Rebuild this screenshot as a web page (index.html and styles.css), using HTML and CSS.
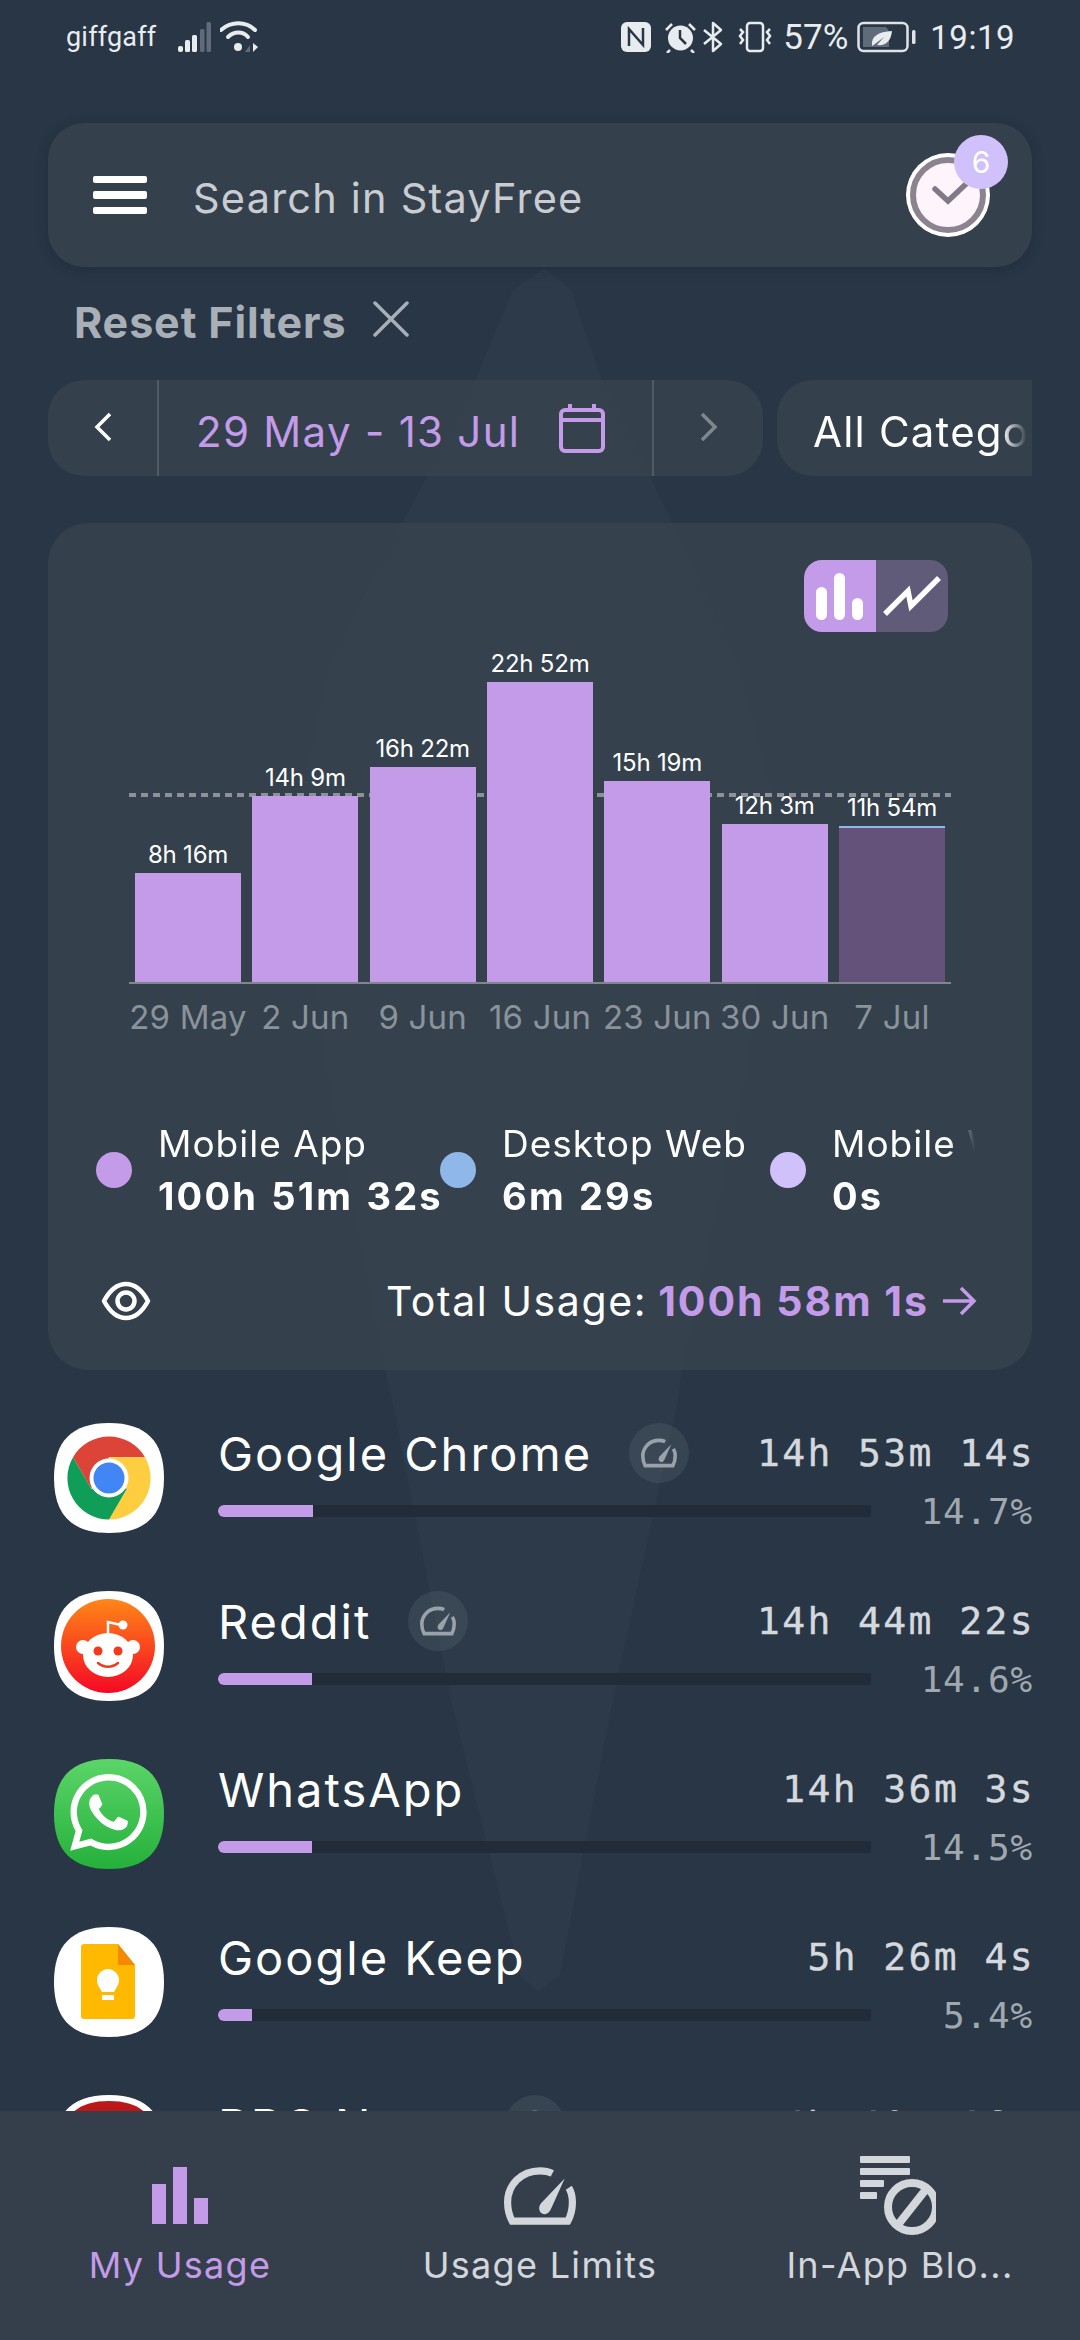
FILE: index.html
```html
<!DOCTYPE html>
<html lang="en">
<head>
<meta charset="utf-8">
<title>StayFree</title>
<link rel="stylesheet" href="styles.css">
</head>
<body>
<div class="phone">
  <svg class="backdrop" width="1080" height="2340" viewBox="0 0 1080 2340" aria-hidden="true">
    <polygon points="544,268 571,290 602,380 650,476 737,660 775,800 750,1060 682,1370 678,1400 613,1700 560,1975 538,1992 520,1975 451,1700 392,1400 385,1370 324,1060 300,800 330,660 427,476 475,380 513,290"/>
  </svg>

  <main class="main">
    <header class="status">
      <div class="status-side">
        <span class="carrier">giffgaff</span>
        <svg class="st-signal" width="34" height="32" viewBox="0 0 34 32"><g fill="#e9ecef"><rect x="0" y="25" width="5" height="6" rx="2"/><rect x="7" y="19" width="5" height="12" rx="1.5"/><rect x="14" y="14" width="5" height="17" rx="1.5"/></g><g fill="#5f6b78"><rect x="22" y="8" width="4.5" height="23" rx="1.5"/><rect x="28.5" y="1" width="4.5" height="30" rx="1.5"/></g></svg>
        <svg class="st-wifi" width="40" height="32" viewBox="0 0 40 32"><g fill="none" stroke="#e9ecef" stroke-width="4" stroke-linecap="round"><path d="M1 9C11 0 26 0 35 9"/><path d="M8 16C14 10 23 10 28 16"/></g><circle cx="18" cy="26" r="4" fill="#e9ecef"/><path d="M30 31V24l-5 7Z" fill="#5f6b78"/><path d="M33 22v9l5-5Z" fill="#e9ecef"/></svg>
      </div>
      <div class="status-side">
        <svg class="st-nfc" width="30" height="30" viewBox="0 0 30 30"><rect width="30" height="30" rx="6" fill="#e9ecef"/><path d="M8 24V7l14 16V6" fill="none" stroke="#283645" stroke-width="2.5"/></svg>
        <svg class="st-alarm" width="33" height="32" viewBox="0 0 33 32"><circle cx="16.500" cy="17" r="12.500" fill="#e9ecef"/><path d="M16 9v8l6 6" fill="none" stroke="#283645" stroke-width="2.500"/><path d="M2 9l6-6M31 9l-6-6M6 29l-3 3M27 29l3 3" stroke="#e9ecef" stroke-width="2.500" fill="none"/></svg>
        <svg class="st-bt" width="22" height="32" viewBox="0 0 22 32"><path d="M2 9l17 14-8 7V2l8 7L2 23" fill="none" stroke="#e9ecef" stroke-width="2.500" stroke-linejoin="round"/></svg>
        <svg class="st-vib" width="38" height="32" viewBox="0 0 38 32"><rect x="11" y="2" width="16" height="28" rx="3" fill="none" stroke="#e9ecef" stroke-width="2.500"/><path d="M4 8l3 3-3 4 3 4-3 4M34 8l-3 3 3 4-3 4 3 4" fill="none" stroke="#e9ecef" stroke-width="2.500"/></svg>
        <span class="pct">57%</span>
        <svg class="st-batt" width="60" height="32" viewBox="0 0 60 32"><rect x="1.500" y="2" width="49" height="28" rx="5" fill="none" stroke="#dfe3e7" stroke-width="2.500"/><path d="M6 6h23l3 4v16H6Z" fill="#5f6b78"/><rect x="55" y="9" width="3.500" height="14" rx="1.500" fill="#dfe3e7"/><path d="M15 25c-1-10 6-14 20-15-1 10-6 15-15 14l7-8-9 7Z" fill="#e9ecef"/></svg>
        <span class="clock-time">19:19</span>
      </div>
    </header>

    <section class="search">
      <div class="burger"><i></i><i></i><i></i></div>
      <span class="search-text">Search in StayFree</span>
      <div class="todo">
        <svg width="84" height="84" viewBox="0 0 84 84"><circle cx="42" cy="42" r="42" fill="#fff"/><circle cx="42" cy="42" r="35" fill="#fdf5fb" stroke="#8b8490" stroke-width="6"/><path d="M29 36l13 12 19-18" fill="none" stroke="#7f7a85" stroke-width="5.500" stroke-linecap="round" stroke-linejoin="miter"/></svg>
        <span class="badge">6</span>
      </div>
    </section>

    <div class="reset">
      <span>Reset Filters</span>
      <svg width="36" height="36" viewBox="0 0 36 36"><path d="M2 2l32 32M34 2L2 34" fill="none" stroke="#a9afb6" stroke-width="3.500" stroke-linecap="round"/></svg>
    </div>

    <div class="filters">
      <div class="date-pill">
        <div class="chev-cell">
          <svg width="20" height="30" viewBox="0 0 20 30"><path d="M17 2L4 15l13 13" fill="none" stroke="#fff" stroke-width="3.500"/></svg>
        </div>
        <div class="date-cell">
          <span>29 May - 13 Jul</span>
          <svg width="48" height="50" viewBox="0 0 48 50"><rect x="3" y="7" width="42" height="41" rx="4" fill="none" stroke="#c39be8" stroke-width="4"/><path d="M3 17h42M12 1v8M36 1v8" stroke="#c39be8" stroke-width="4" fill="none"/></svg>
        </div>
        <div class="chev-cell">
          <svg width="20" height="30" viewBox="0 0 20 30"><path d="M3 2l13 13L3 28" fill="none" stroke="#7f878f" stroke-width="3.500"/></svg>
        </div>
      </div>
      <div class="cat-pill"><span>All Categories</span></div>
    </div>

    <section class="card">
      <div class="toggle">
        <div class="toggle-on">
          <svg width="72" height="72" viewBox="0 0 72 72"><g fill="#fff"><rect x="12" y="27" width="11" height="33" rx="5.500"/><rect x="30" y="13" width="11" height="47" rx="5.500"/><rect x="48" y="38" width="11" height="22" rx="5.500"/></g></svg>
        </div>
        <div class="toggle-off">
          <svg width="72" height="72" viewBox="0 0 72 72"><path d="M9 54l23-23 3 15 28-28" fill="none" stroke="#fff" stroke-width="5.500" stroke-linejoin="miter"/></svg>
        </div>
      </div>

      <div class="plot">
        <div class="avg-line"></div>
        <div class="bars">
          <div class="bar-col"><span class="bar-label">8h 16m</span><div class="bar" style="height:109px"></div></div>
          <div class="bar-col"><span class="bar-label">14h 9m</span><div class="bar" style="height:186px"></div></div>
          <div class="bar-col"><span class="bar-label">16h 22m</span><div class="bar" style="height:215px"></div></div>
          <div class="bar-col"><span class="bar-label">22h 52m</span><div class="bar" style="height:300px"></div></div>
          <div class="bar-col"><span class="bar-label">15h 19m</span><div class="bar" style="height:201px"></div></div>
          <div class="bar-col"><span class="bar-label">12h 3m</span><div class="bar" style="height:158px"></div></div>
          <div class="bar-col"><span class="bar-label">11h 54m</span><div class="bar bar-current" style="height:156px"></div></div>
        </div>
      </div>
      <div class="axis">
        <span>29 May</span><span>2 Jun</span><span>9 Jun</span><span>16 Jun</span><span>23 Jun</span><span>30 Jun</span><span>7 Jul</span>
      </div>

      <div class="legend">
        <div class="legend-item legend-a">
          <i class="dot dot-app"></i>
          <div class="legend-text"><span>Mobile App</span><b>100h 51m 32s</b></div>
        </div>
        <div class="legend-item legend-b">
          <i class="dot dot-desktop"></i>
          <div class="legend-text"><span>Desktop Web</span><b>6m 29s</b></div>
        </div>
        <div class="legend-item">
          <i class="dot dot-web"></i>
          <div class="legend-text"><span>Mobile Web</span><b>0s</b></div>
        </div>
      </div>

      <div class="total">
        <svg width="50" height="40" viewBox="0 0 50 40"><path d="M3 20C10 7 17 3 25 3s15 4 22 17c-7 13-14 17-22 17S10 33 3 20Z" fill="none" stroke="#fff" stroke-width="4.500" stroke-linejoin="round"/><circle cx="25" cy="20" r="8.500" fill="none" stroke="#fff" stroke-width="4.500"/></svg>
        <div class="total-text">
          <span class="total-label">Total Usage:</span>
          <b>100h 58m 1s</b>
          <svg width="36" height="32" viewBox="0 0 36 32"><path d="M2 16h31M20 3l13 13-13 13" fill="none" stroke="#c39be8" stroke-width="3.500"/></svg>
        </div>
      </div>
    </section>

    <ul class="apps">
      <li class="app">
        <svg class="app-icon" viewBox="0 0 110 110">
          <path class="sq-white" d="M55 0C92 0 110 18 110 55S92 110 55 110 0 92 0 55 18 0 55 0Z"/>
          <path fill="#db4437" d="M19 34.250A41.500 41.500 0 0 1 91 34.250H55L37 65.400Z"/>
          <path fill="#ffcd40" transform="rotate(120 55 55)" d="M19 34.250A41.500 41.500 0 0 1 91 34.250H55L37 65.400Z"/>
          <path fill="#0f9d58" transform="rotate(240 55 55)" d="M19 34.250A41.500 41.500 0 0 1 91 34.250H55L37 65.400Z"/>
          <circle cx="55" cy="55" r="19.500" fill="#fff"/><circle cx="55" cy="55" r="15.500" fill="#4285f4"/>
        </svg>
        <div class="app-body">
          <div class="app-top">
            <span class="app-name">Google Chrome</span>
            <span class="chip"><svg width="36" height="30" viewBox="0 0 70 56"><use href="#gauge"/></svg></span>
            <span class="app-time">14h 53m 14s</span>
          </div>
          <div class="app-bottom">
            <div class="track"><div class="fill" style="width:95px"></div></div>
            <span class="app-pct">14.7%</span>
          </div>
        </div>
      </li>
      <li class="app">
        <svg class="app-icon" viewBox="0 0 110 110">
          <defs><linearGradient id="rd" x1="0" y1="0" x2="0" y2="1"><stop offset="0" stop-color="#ff8717"/><stop offset="1" stop-color="#f50825"/></linearGradient></defs>
          <path class="sq-white" d="M55 0C92 0 110 18 110 55S92 110 55 110 0 92 0 55 18 0 55 0Z"/>
          <circle cx="54" cy="55" r="47" fill="url(#rd)"/>
          <path d="M54 52V31l13 3" fill="none" stroke="#fff" stroke-width="2.500"/><circle cx="69" cy="34" r="4.500" fill="#fff"/>
          <circle cx="29" cy="56" r="7" fill="#fff"/><circle cx="79" cy="56" r="7" fill="#fff"/>
          <ellipse cx="54" cy="64" rx="25" ry="22" fill="#fff"/>
          <circle cx="44" cy="60" r="4.500" fill="#f4381b"/><circle cx="64" cy="60" r="4.500" fill="#f4381b"/>
          <path d="M44 72c6 5 14 5 20 0" fill="none" stroke="#f4381b" stroke-width="2.500" stroke-linecap="round"/>
        </svg>
        <div class="app-body">
          <div class="app-top">
            <span class="app-name">Reddit</span>
            <span class="chip"><svg width="36" height="30" viewBox="0 0 70 56"><use href="#gauge"/></svg></span>
            <span class="app-time">14h 44m 22s</span>
          </div>
          <div class="app-bottom">
            <div class="track"><div class="fill" style="width:94px"></div></div>
            <span class="app-pct">14.6%</span>
          </div>
        </div>
      </li>
      <li class="app">
        <svg class="app-icon" viewBox="0 0 110 110">
          <defs><linearGradient id="wa" x1="0" y1="0" x2="0" y2="1"><stop offset="0" stop-color="#5bd568"/><stop offset="1" stop-color="#25b03b"/></linearGradient></defs>
          <path fill="url(#wa)" d="M55 0C92 0 110 18 110 55S92 110 55 110 0 92 0 55 18 0 55 0Z"/>
          <path transform="translate(16 15) scale(3.200)" fill="#fff" d="M17.472 14.382c-.297-.149-1.758-.867-2.03-.967-.273-.099-.471-.148-.67.15-.197.297-.767.966-.94 1.164-.173.199-.347.223-.644.075-.297-.15-1.255-.463-2.39-1.475-.883-.788-1.48-1.761-1.653-2.059-.173-.297-.018-.458.13-.606.134-.133.298-.347.446-.52.149-.174.198-.298.298-.497.099-.198.05-.371-.025-.52-.075-.149-.669-1.612-.916-2.207-.242-.579-.487-.5-.669-.51-.173-.008-.371-.01-.57-.01-.198 0-.52.074-.792.372-.272.297-1.04 1.016-1.04 2.479 0 1.462 1.065 2.875 1.213 3.074.149.198 2.096 3.2 5.077 4.487.709.306 1.262.489 1.694.625.712.227 1.36.195 1.871.118.571-.085 1.758-.719 2.006-1.413.248-.694.248-1.289.173-1.413-.074-.124-.272-.198-.57-.347m-5.421 7.403h-.004a9.87 9.87 0 01-5.031-1.378l-.361-.214-3.741.982.998-3.648-.235-.374a9.86 9.86 0 01-1.51-5.26c.001-5.45 4.436-9.884 9.888-9.884 2.64 0 5.122 1.03 6.988 2.898a9.825 9.825 0 012.893 6.994c-.003 5.45-4.437 9.884-9.885 9.884m8.413-18.297A11.815 11.815 0 0012.05 0C5.495 0 .16 5.335.157 11.892c0 2.096.547 4.142 1.588 5.945L.057 24l6.305-1.654a11.882 11.882 0 005.683 1.448h.005c6.554 0 11.89-5.335 11.893-11.893a11.821 11.821 0 00-3.48-8.413Z"/>
        </svg>
        <div class="app-body">
          <div class="app-top">
            <span class="app-name">WhatsApp</span>
            <span class="app-time">14h 36m 3s</span>
          </div>
          <div class="app-bottom">
            <div class="track"><div class="fill" style="width:94px"></div></div>
            <span class="app-pct">14.5%</span>
          </div>
        </div>
      </li>
      <li class="app">
        <svg class="app-icon" viewBox="0 0 110 110">
          <path class="sq-white" d="M55 0C92 0 110 18 110 55S92 110 55 110 0 92 0 55 18 0 55 0Z"/>
          <path fill="#ffb900" d="M30 17H64L81 38V89a3 3 0 0 1-3 3H30a3 3 0 0 1-3-3V20a3 3 0 0 1 3-3Z"/>
          <path fill="#f48a00" d="M64 17L81 38H64Z"/>
          <path fill="#fff" d="M54 42c-6 0-11 5-11 11 0 5 3 8 5 12h12c2-4 5-7 5-12 0-6-5-11-11-11Z"/><rect x="48" y="68" width="12" height="5" fill="#fff"/>
        </svg>
        <div class="app-body">
          <div class="app-top">
            <span class="app-name">Google Keep</span>
            <span class="app-time">5h 26m 4s</span>
          </div>
          <div class="app-bottom">
            <div class="track"><div class="fill" style="width:34px"></div></div>
            <span class="app-pct">5.4%</span>
          </div>
        </div>
      </li>
      <li class="app">
        <svg class="app-icon" viewBox="0 0 110 110">
          <path class="sq-white" d="M55 0C92 0 110 18 110 55S92 110 55 110 0 92 0 55 18 0 55 0Z"/>
          <path fill="#bb1919" transform="translate(6 6) scale(.89)" d="M55 0C92 0 110 18 110 55S92 110 55 110 0 92 0 55 18 0 55 0Z"/>
        </svg>
        <div class="app-body">
          <div class="app-top">
            <span class="app-name">BBC News</span>
            <span class="chip"><svg width="36" height="30" viewBox="0 0 70 56"><use href="#gauge"/></svg></span>
            <span class="app-time">4h 40m 16s</span>
          </div>
        </div>
      </li>
    </ul>
  </main>

  <nav class="nav">
    <div class="nav-item nav-active">
      <svg width="58" height="58" viewBox="0 0 58 58"><g fill="#c39be8"><rect x="1" y="17" width="14" height="40"/><rect x="22" y="0" width="14" height="57"/><rect x="43" y="31" width="14" height="26"/></g></svg>
      <span>My Usage</span>
    </div>
    <div class="nav-item">
      <svg width="72" height="58" viewBox="0 0 70 56"><use href="#gauge" class="gauge-nav"/></svg>
      <span>Usage Limits</span>
    </div>
    <div class="nav-item">
      <svg class="nav-block" width="84" height="82" viewBox="0 0 84 82"><g fill="#d3d7db"><rect x="8" y="0" width="50" height="7" rx="1"/><rect x="8" y="12" width="50" height="7" rx="1"/><rect x="8" y="24" width="24" height="7" rx="1"/><rect x="8" y="36" width="17" height="7" rx="1"/></g><circle cx="60" cy="51" r="24" fill="none" stroke="#d3d7db" stroke-width="8"/><path d="M45 70L75 32" stroke="#d3d7db" stroke-width="8"/></svg>
      <span>In-App Blo...</span>
    </div>
  </nav>

  <svg class="defs" width="0" height="0" aria-hidden="true">
    <defs>
      <g id="gauge">
        <path d="M47 6C43 4 39 3.500 35 3.500 17 3.500 3.500 17 3.500 34c0 7 1.500 13 4.500 18.500H62C65 47 66.500 41 66.500 34c0-5-1-10-3.500-14" fill="none" stroke="currentColor" stroke-width="7"/>
        <path d="M59 11L46 40c-2 5-6 7-9 5-3-2-4-6-1-10Z" fill="currentColor"/>
      </g>
    </defs>
  </svg>
</div>
</body>
</html>
```

FILE: styles.css
```css
* { box-sizing: border-box; }
html, body { margin: 0; padding: 0; }
body { font-family: Inter, "Noto Sans", sans-serif; background: #283645; }

.phone {
  position: relative;
  width: 1080px;
  height: 2340px;
  overflow: hidden;
  display: flex;
  flex-direction: column;
  background: #283645;
  color: #fff;
}
.backdrop { position: absolute; left: 0; top: 0; }
.backdrop polygon { fill: #2c3a49; }
.defs { position: absolute; }

.main {
  position: relative;
  flex: 1;
  min-height: 0;
  overflow: hidden;
  padding: 0 48px;
}

/* status bar */
.status {
  height: 76px;
  padding: 20px 17px 0 18px;
  display: flex;
  justify-content: space-between;
  align-items: flex-start;
  color: #e9ecef;
}
.status-side { display: flex; align-items: center; height: 34px; }
.carrier { font-family: Roboto, sans-serif; font-size: 27px; letter-spacing: .2px; width: 112px; }
.st-wifi { margin-left: 8px; }
.st-alarm { margin-left: 13px; }
.st-bt { margin-left: 5px; }
.st-vib { margin-left: 12px; }
.pct { font-family: Roboto, sans-serif; font-size: 35px; margin-left: 9px; }
.st-batt { margin-left: 9px; }
.clock-time { font-family: Roboto, sans-serif; font-size: 33px; margin-left: 13px; letter-spacing: .5px; }

/* search */
.search {
  margin-top: 47px;
  height: 144px;
  border-radius: 36px;
  background: rgba(62, 72, 82, .55);
  box-shadow: 0 2px 12px rgba(20, 30, 42, .35);
  display: flex;
  align-items: center;
  padding: 0 42px 0 45px;
}
.burger { width: 54px; display: flex; flex-direction: column; gap: 8px; }
.burger i { display: block; height: 7.500px; border-radius: 2px; background: #fff; }
.search-text { flex: 1; margin: 6px 0 0 46px; font-size: 41.500px; letter-spacing: 1.200px; color: #c9cdd1; }
.todo { position: relative; width: 84px; height: 84px; }
.todo svg { display: block; }
.badge {
  position: absolute;
  left: 48px;
  top: -18px;
  width: 54px;
  height: 54px;
  border-radius: 50%;
  background: #d0c1fb;
  color: #fff;
  font-size: 30px;
  line-height: 54px;
  text-align: center;
}

/* reset */
.reset {
  margin-top: 30px;
  height: 50px;
  padding-left: 26px;
  display: flex;
  align-items: center;
  gap: 27px;
  color: #a9afb6;
  font-size: 43px;
  font-weight: 700;
  letter-spacing: .9px;
  white-space: nowrap;
}
.reset svg { margin-top: -7px; }

/* filters */
.filters {
  margin-top: 33px;
  display: flex;
  gap: 14px;
  overflow: hidden;
}
.date-pill {
  flex: none;
  width: 715px;
  height: 96px;
  border-radius: 36px;
  background: rgba(62, 72, 82, .55);
  display: flex;
}
.chev-cell { width: 109px; display: flex; align-items: center; justify-content: center; }
.chev-cell svg { margin-top: -3px; }
.date-cell {
  flex: 1;
  border-left: 2px solid #515b66;
  border-right: 2px solid #515b66;
  padding-left: 37px;
  display: flex;
  align-items: center;
  gap: 38px;
  color: #c39be8;
  font-size: 42px;
  letter-spacing: 1.300px;
}
.date-cell span { margin-top: 6px; white-space: nowrap; }
.cat-pill {
  flex: none;
  width: 300px;
  height: 96px;
  border-radius: 36px;
  background: rgba(62, 72, 82, .55);
  padding: 6px 0 0 36px;
  display: flex;
  align-items: center;
  font-size: 42px;
  letter-spacing: 1.200px;
  white-space: nowrap;
  overflow: hidden;
}
.cat-pill span { width: 214px; overflow: hidden; -webkit-mask-image: linear-gradient(to right, #000 88%, transparent); mask-image: linear-gradient(to right, #000 88%, transparent); }

/* chart card */
.card {
  margin-top: 47px;
  height: 847px;
  border-radius: 40px;
  background: rgba(62, 72, 82, .55);
  padding-top: 37px;
}
.toggle {
  width: 144px;
  height: 72px;
  margin-left: 756px;
  border-radius: 18px;
  overflow: hidden;
  display: flex;
}
.toggle-on { width: 72px; background: #c39be8; }
.toggle-off { width: 72px; background: #5f5b78; }
.toggle svg { display: block; }

.plot {
  position: relative;
  height: 352px;
  margin: 0 81px;
  padding: 0 6px;
  border-bottom: 2px solid #7f868e;
}
.avg-line {
  position: absolute;
  left: 0;
  right: 0;
  top: 161px;
  height: 4px;
  background: repeating-linear-gradient(to right, #8c9298 0 7px, transparent 7px 12px);
}
.bars {
  position: relative;
  height: 100%;
  display: grid;
  grid-template-columns: repeat(7, minmax(0, 1fr));
  column-gap: 11.300px;
}
.bar-col { display: flex; flex-direction: column; justify-content: flex-end; align-items: stretch; min-width: 0; }
.bar-label { font-size: 24px; line-height: 30px; text-align: center; white-space: nowrap; margin-bottom: 3px; letter-spacing: -.2px; }
.bar { background: #c39be8; }
.bar-current { background: #65527a; border-top: 2px solid #8fb8e8; }

.axis {
  margin: 11px 81px 0;
  padding: 0 6px;
  display: grid;
  grid-template-columns: repeat(7, minmax(0, 1fr));
  column-gap: 11.300px;
  color: #8a929a;
  font-size: 33px;
  letter-spacing: .2px;
  line-height: 44px;
  white-space: nowrap;
}
.axis span { display: flex; justify-content: center; }

.legend {
  margin: 79px 57px 0 48px;
  height: 104px;
  display: flex;
  overflow: hidden;
  -webkit-mask-image: linear-gradient(to right, #000 97%, transparent 100%);
  mask-image: linear-gradient(to right, #000 97%, transparent 100%);
}
.legend-item { flex: none; display: flex; align-items: center; gap: 26px; }
.legend-a { width: 344px; }
.legend-b { width: 330px; }
.dot { flex: none; width: 36px; height: 36px; border-radius: 50%; }
.dot-app { background: #c39be8; }
.dot-desktop { background: #8fb8e8; }
.dot-web { background: #d0c1fb; }
.legend-text { display: flex; flex-direction: column; white-space: nowrap; font-size: 37px; line-height: 52px; letter-spacing: 1px; }
.legend-text b { font-size: 38px; font-weight: 700; letter-spacing: 2.200px; word-spacing: 2px; }

.total {
  margin: 54px 55px 0 53px;
  display: flex;
  justify-content: space-between;
  align-items: center;
}
.total-text { display: flex; align-items: center; font-size: 41px; letter-spacing: 1.600px; white-space: nowrap; }
.total-text b { margin-left: 11px; color: #c39be8; font-weight: 700; letter-spacing: 2px; }
.total-text svg { margin-left: 12px; }

/* app list */
.apps {
  list-style: none;
  margin: 53px 0 0;
  padding: 0;
  display: flex;
  flex-direction: column;
  gap: 58px;
}
.app { display: flex; height: 110px; padding-left: 6px; gap: 54px; }
.app-icon { flex: none; width: 110px; height: 110px; display: block; }
.sq-white { fill: #fff; }
.app-body { flex: 1; min-width: 0; }
.app-top { height: 60px; display: flex; align-items: center; }
.app-name { font-size: 47px; letter-spacing: 2px; white-space: nowrap; }
.chip {
  margin-left: 37px;
  width: 60px;
  height: 60px;
  border-radius: 50%;
  background: rgba(255, 255, 255, .07);
  color: #9aa2a9;
  display: flex;
  align-items: center;
  justify-content: center;
}
.app-time {
  margin: 0 -3px 0 auto;
  font-family: "DejaVu Sans Mono", monospace;
  font-size: 38px;
  letter-spacing: 2.400px;
  -webkit-text-stroke: .4px #d5d9de;
  color: #d5d9de;
  white-space: nowrap;
}
.app-bottom { margin-top: 6px; height: 44px; display: flex; align-items: center; justify-content: space-between; }
.track { width: 653px; height: 12px; background: #212c38; overflow: hidden; border-radius: 6px 0 0 6px; }
.fill { height: 100%; background: #c39be8; }
.app-pct {
  margin-right: -1px;
  font-family: "DejaVu Sans Mono", monospace;
  font-size: 36px;
  letter-spacing: .8px;
  color: #a0a8af;
}

/* bottom nav */
.nav {
  position: relative;
  flex: none;
  height: 229px;
  background: #353f4b;
  display: grid;
  grid-template-columns: repeat(3, 1fr);
  color: #d3d7db;
}
.nav-item {
  position: relative;
  padding-top: 56px;
  display: flex;
  flex-direction: column;
  align-items: center;
  font-size: 36px;
  letter-spacing: 1.300px;
}
.nav-item svg { display: block; height: 58px; }
.nav-item span { margin-top: 18px; line-height: 44px; white-space: nowrap; }
.nav-item .nav-block { height: 82px; margin-top: -11px; margin-bottom: -13px; margin-left: -12px; }
.nav-active { color: #c39be8; }
```
